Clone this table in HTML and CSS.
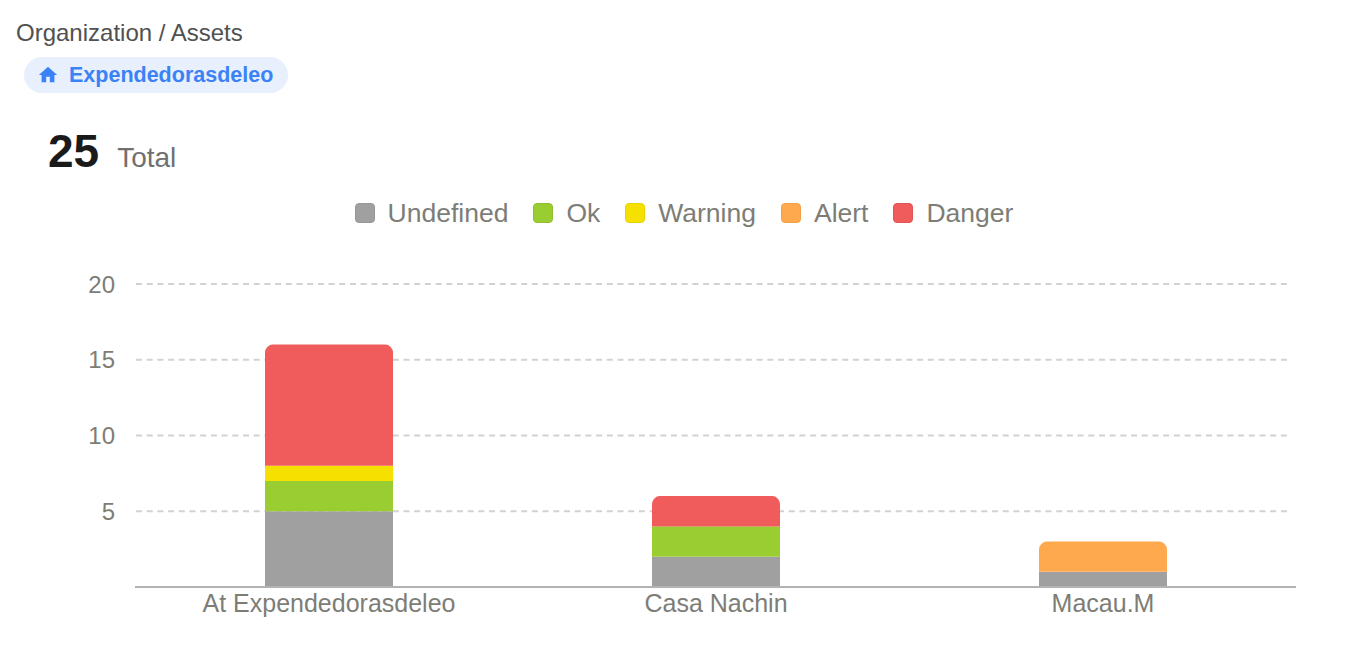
FILE: index.html
```html
<!DOCTYPE html>
<html lang="en">
<head>
<meta charset="utf-8">
<title>Assets</title>
<link rel="stylesheet" href="styles.css">
</head>
<body>
<div class="crumb">Organization / Assets</div>
<div class="pill-row">
  <div class="pill">
    <svg class="home" viewBox="0 0 24 24" width="22" height="22"><path d="M10 20v-6h4v6h5v-8h3L12 3 2 12h3v8z" fill="currentColor"/></svg>
    <span>Expendedorasdeleo</span>
  </div>
</div>
<div class="stat">
  <span class="num">25</span>
  <span class="lbl">Total</span>
</div>
<div class="legend">
  <div class="item"><span class="sw sw-undef"></span><span>Undefined</span></div>
  <div class="item"><span class="sw sw-ok"></span><span>Ok</span></div>
  <div class="item"><span class="sw sw-warn"></span><span>Warning</span></div>
  <div class="item"><span class="sw sw-alert"></span><span>Alert</span></div>
  <div class="item"><span class="sw sw-danger"></span><span>Danger</span></div>
</div>
<svg class="chart" width="1368" height="400" viewBox="0 0 1368 400">
  <g class="grid">
    <line x1="136" y1="56" x2="1291" y2="56"/>
    <line x1="136" y1="131.75" x2="1291" y2="131.75"/>
    <line x1="136" y1="207.5" x2="1291" y2="207.5"/>
    <line x1="136" y1="283.25" x2="1291" y2="283.25"/>
  </g>
  <g class="ylab">
    <text x="115" y="64.5">20</text>
    <text x="115" y="140.3">15</text>
    <text x="115" y="216">10</text>
    <text x="115" y="291.8">5</text>
  </g>
  <!-- bar 1: gray 0-5, green 5-7, yellow 7-8, red 8-16 -->
  <rect class="c-undef" x="265" y="283.25" width="128" height="75.75"/>
  <rect class="c-ok" x="265" y="253" width="128" height="30.25"/>
  <rect class="c-warn" x="265" y="237.8" width="128" height="15.2"/>
  <path class="c-danger" d="M265 237.8 V124.6 a8 8 0 0 1 8 -8 H385 a8 8 0 0 1 8 8 V237.8 Z"/>
  <!-- bar 2: gray 0-2, green 2-4, red 4-6 -->
  <rect class="c-undef" x="652" y="328.7" width="128" height="30.3"/>
  <rect class="c-ok" x="652" y="298.4" width="128" height="30.3"/>
  <path class="c-danger" d="M652 298.4 V276.1 a8 8 0 0 1 8 -8 H772 a8 8 0 0 1 8 8 V298.4 Z"/>
  <!-- bar 3: gray 0-1, orange 1-3 -->
  <rect class="c-undef" x="1039" y="343.85" width="128" height="15.15"/>
  <path class="c-alert" d="M1039 343.85 V321.55 a8 8 0 0 1 8 -8 H1159 a8 8 0 0 1 8 8 V343.85 Z"/>
  <line class="axis" x1="135" y1="359" x2="1296" y2="359"/>
  <g class="xlab">
    <text x="329" y="384">At Expendedorasdeleo</text>
    <text x="716" y="384">Casa Nachin</text>
    <text x="1103" y="384">Macau.M</text>
  </g>
</svg>
</body>
</html>
```
FILE: styles.css
```css
html, body {
  margin: 0;
  padding: 0;
  background: #ffffff;
}
body {
  font-family: "Liberation Sans", Arial, sans-serif;
  width: 1368px;
}
.crumb {
  padding: 19px 0 0 16px;
  height: 28px;
  line-height: 28px;
  font-size: 24px;
  color: #505050;
}
.pill-row {
  display: flex;
  padding-left: 24px;
  margin-top: 10px;
}
.pill {
  display: flex;
  align-items: center;
  gap: 10px;
  height: 36px;
  padding: 0 15px 0 13px;
  border-radius: 18px;
  background: #e8f0fd;
  color: #3b82f6;
  font-weight: bold;
  font-size: 21.5px;
  line-height: 36px;
}
.home {
  display: block;
  flex: none;
}
.stat {
  display: flex;
  align-items: baseline;
  gap: 18px;
  margin-top: 32px;
  height: 52px;
  padding-left: 48px;
  line-height: 52px;
}
.num {
  font-size: 46px;
  font-weight: bold;
  color: #1a1a1a;
}
.lbl {
  font-size: 28px;
  color: #707070;
}
.legend {
  display: flex;
  justify-content: center;
  gap: 25px;
  margin-top: 21px;
  height: 30px;
  line-height: 30px;
  font-size: 26.5px;
  color: #7d7d76;
}
.item {
  display: flex;
  align-items: center;
  gap: 13px;
}
.sw {
  display: block;
  width: 20px;
  height: 20px;
  box-sizing: border-box;
  border-radius: 4px;
  border: 1px solid;
}
.sw-undef { background: #a0a0a0; border-color: #979797; }
.sw-ok { background: #9acd32; border-color: #8fc02c; }
.sw-warn { background: #f6e000; border-color: #e9d300; }
.sw-alert { background: #ffa94f; border-color: #f4a04a; }
.sw-danger { background: #f05c5c; border-color: #e35454; }
.chart {
  display: block;
}
.grid line {
  stroke: #d2d2d2;
  stroke-width: 2;
  stroke-dasharray: 6 4.7;
}
.axis {
  stroke: #b3b3b3;
  stroke-width: 2;
}
.ylab text {
  font-family: "Liberation Sans", Arial, sans-serif;
  font-size: 24px;
  fill: #7d7d76;
  text-anchor: end;
}
.xlab text {
  font-family: "Liberation Sans", Arial, sans-serif;
  font-size: 25px;
  fill: #7d7d76;
  text-anchor: middle;
}
.c-undef { fill: #a0a0a0; }
.c-ok { fill: #9acd32; }
.c-warn { fill: #f6e000; }
.c-alert { fill: #ffa94f; }
.c-danger { fill: #f05c5c; }
```
